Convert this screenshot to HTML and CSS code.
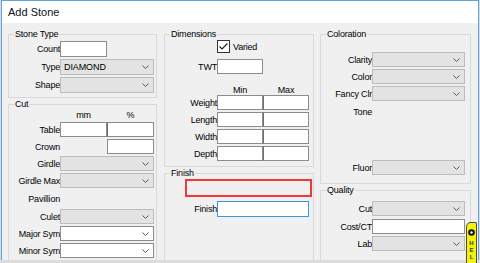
FILE: index.html
```html
<!DOCTYPE html>
<html>
<head>
<meta charset="utf-8">
<link rel="stylesheet" href="styles.css">
</head>
<body>
<div class="window">
  <div class="titlebar">Add Stone</div>
  <div class="client">
    <div class="col col1">
      <fieldset class="group g-stone">
        <legend>Stone Type</legend>
        <div class="rows">
          <div class="row r16"><span class="lbl">Count</span><span class="tb w47"></span></div>
          <div class="row r16"><span class="lbl">Type</span><span class="cb w94"><span class="cb-text">DIAMOND</span><svg class="chev" width="7" height="4" viewBox="0 0 7 4"><polyline points="0.5,0.5 3.5,3.5 6.5,0.5" fill="none" stroke="#5a5a5a" stroke-width="1"/></svg></span></div>
          <div class="row r16"><span class="lbl">Shape</span><span class="cb w94"><span class="cb-text"></span><svg class="chev" width="7" height="4" viewBox="0 0 7 4"><polyline points="0.5,0.5 3.5,3.5 6.5,0.5" fill="none" stroke="#5a5a5a" stroke-width="1"/></svg></span></div>
        </div>
      </fieldset>
      <fieldset class="group g-cut grow">
        <legend>Cut</legend>
        <div class="rows">
          <div class="row hdr"><span class="lbl"></span><span class="hcell w47">mm</span><span class="hcell w47">%</span></div>
          <div class="row r15 t2"><span class="lbl">Table</span><span class="tb w47"></span><span class="tb w47"></span></div>
          <div class="row r15"><span class="lbl">Crown</span><span class="tb w47 skip47"></span></div>
          <div class="row r15"><span class="lbl">Girdle</span><span class="cb w94"><span class="cb-text"></span><svg class="chev" width="7" height="4" viewBox="0 0 7 4"><polyline points="0.5,0.5 3.5,3.5 6.5,0.5" fill="none" stroke="#5a5a5a" stroke-width="1"/></svg></span></div>
          <div class="row r15"><span class="lbl">Girdle Max</span><span class="cb w94"><span class="cb-text"></span><svg class="chev" width="7" height="4" viewBox="0 0 7 4"><polyline points="0.5,0.5 3.5,3.5 6.5,0.5" fill="none" stroke="#5a5a5a" stroke-width="1"/></svg></span></div>
          <div class="row r17"><span class="lbl">Pavillion</span></div>
          <div class="row r15"><span class="lbl">Culet</span><span class="cb w94"><span class="cb-text"></span><svg class="chev" width="7" height="4" viewBox="0 0 7 4"><polyline points="0.5,0.5 3.5,3.5 6.5,0.5" fill="none" stroke="#5a5a5a" stroke-width="1"/></svg></span></div>
          <div class="row r15"><span class="lbl">Major Sym</span><span class="cb cb-edit w94"><span class="cb-text"></span><svg class="chev" width="7" height="4" viewBox="0 0 7 4"><polyline points="0.5,0.5 3.5,3.5 6.5,0.5" fill="none" stroke="#5a5a5a" stroke-width="1"/></svg></span></div>
          <div class="row r15"><span class="lbl">Minor Sym</span><span class="cb cb-edit w94"><span class="cb-text"></span><svg class="chev" width="7" height="4" viewBox="0 0 7 4"><polyline points="0.5,0.5 3.5,3.5 6.5,0.5" fill="none" stroke="#5a5a5a" stroke-width="1"/></svg></span></div>
        </div>
      </fieldset>
    </div>

    <div class="col col2">
      <fieldset class="group g-dim">
        <legend>Dimensions</legend>
        <div class="rows">
          <div class="row r13 chkrow"><span class="lbl"></span><span class="chk"><svg width="11" height="11" viewBox="0 0 11 11"><polyline points="1.5,5.5 4,8 9.5,2.5" fill="none" stroke="#222" stroke-width="1.2"/></svg></span><span class="chk-text">Varied</span></div>
          <div class="row r15 twt"><span class="lbl">TWT</span><span class="tb w46"></span></div>
          <div class="row hdr mmhdr"><span class="lbl"></span><span class="hcell w46">Min</span><span class="hcell w46">Max</span></div>
          <div class="row r15 t1"><span class="lbl">Weight</span><span class="tb w46"></span><span class="tb w46"></span></div>
          <div class="row r15"><span class="lbl">Length</span><span class="tb w46"></span><span class="tb w46"></span></div>
          <div class="row r15"><span class="lbl">Width</span><span class="tb w46"></span><span class="tb w46"></span></div>
          <div class="row r15"><span class="lbl">Depth</span><span class="tb w46"></span><span class="tb w46"></span></div>
        </div>
      </fieldset>
      <fieldset class="group g-finish grow">
        <legend>Finish</legend>
        <div class="rows">
          <div class="errbox"></div>
          <div class="row r16 finrow"><span class="lbl">Finish</span><span class="tb tb-focus w92"></span></div>
        </div>
      </fieldset>
    </div>

    <div class="col col3">
      <fieldset class="group g-color">
        <legend>Coloration</legend>
        <div class="rows">
          <div class="row r15 first"><span class="lbl">Clarity</span><span class="cb w93"><span class="cb-text"></span><svg class="chev" width="7" height="4" viewBox="0 0 7 4"><polyline points="0.5,0.5 3.5,3.5 6.5,0.5" fill="none" stroke="#5a5a5a" stroke-width="1"/></svg></span></div>
          <div class="row r15"><span class="lbl">Color</span><span class="cb w93"><span class="cb-text"></span><svg class="chev" width="7" height="4" viewBox="0 0 7 4"><polyline points="0.5,0.5 3.5,3.5 6.5,0.5" fill="none" stroke="#5a5a5a" stroke-width="1"/></svg></span></div>
          <div class="row r15"><span class="lbl">Fancy Clr</span><span class="cb w93"><span class="cb-text"></span><svg class="chev" width="7" height="4" viewBox="0 0 7 4"><polyline points="0.5,0.5 3.5,3.5 6.5,0.5" fill="none" stroke="#5a5a5a" stroke-width="1"/></svg></span></div>
          <div class="row r15 tone"><span class="lbl">Tone</span></div>
          <div class="row r15 fluor"><span class="lbl">Fluor</span><span class="cb w93"><span class="cb-text"></span><svg class="chev" width="7" height="4" viewBox="0 0 7 4"><polyline points="0.5,0.5 3.5,3.5 6.5,0.5" fill="none" stroke="#5a5a5a" stroke-width="1"/></svg></span></div>
        </div>
      </fieldset>
      <fieldset class="group g-quality grow">
        <legend>Quality</legend>
        <div class="rows">
          <div class="row r15 qfirst"><span class="lbl">Cut</span><span class="cb w93"><span class="cb-text"></span><svg class="chev" width="7" height="4" viewBox="0 0 7 4"><polyline points="0.5,0.5 3.5,3.5 6.5,0.5" fill="none" stroke="#5a5a5a" stroke-width="1"/></svg></span></div>
          <div class="row r15 t3"><span class="lbl">Cost/CT</span><span class="tb w93"></span></div>
          <div class="row r15"><span class="lbl">Lab</span><span class="cb w93"><span class="cb-text"></span><svg class="chev" width="7" height="4" viewBox="0 0 7 4"><polyline points="0.5,0.5 3.5,3.5 6.5,0.5" fill="none" stroke="#5a5a5a" stroke-width="1"/></svg></span></div>
        </div>
      </fieldset>
    </div>
  </div>
</div>
<div class="help-tab">
  <svg class="help-eye" width="7" height="7" viewBox="0 0 7 7"><circle cx="3.5" cy="3.5" r="3.3" fill="#111"/><circle cx="3.5" cy="3.5" r="1.2" fill="#fff"/></svg>
  <span class="help-letter">H</span>
  <span class="help-letter">E</span>
  <span class="help-letter">L</span>
</div>
</body>
</html>
```

FILE: styles.css
```css
* { box-sizing: border-box; }
html, body { margin: 0; padding: 0; }
body {
  width: 480px;
  height: 263px;
  overflow: hidden;
  background: #dcdcdc;
  font-family: "Liberation Sans", Arial, sans-serif;
  font-size: 9px;
  letter-spacing: -0.2px;
  color: #000;
  position: relative;
}
.window {
  margin-left: 1px;
  width: 478px;
  height: 260px;
  border: 1px solid #62a3dc;
  border-bottom: none;
  background: #f0f0f0;
  overflow: hidden;
  display: flex;
  flex-direction: column;
}
.titlebar {
  flex: none;
  height: 22px;
  background: #fff;
  padding-left: 6px;
  font-size: 11px;
  line-height: 22px;
  letter-spacing: 0;
  color: #111;
}
.client {
  flex: none;
  height: 300px;
  display: flex;
  padding: 5px 0 0 6px;
}
.col { display: flex; flex-direction: column; }
.col1 { width: 149px; margin-right: 7px; }
.col2 { width: 150px; margin-right: 6px; }
.col3 { width: 151px; }
.grow { flex: 1 1 auto; }

fieldset.group {
  margin: 0;
  padding: 0;
  border: 1px solid #d9d9d9;
  min-width: 0;
}
legend {
  margin-left: 5px;
  padding: 0 1px;
  height: 12px;
  line-height: 12px;
  font-size: 9px;
}
.rows { display: flex; flex-direction: column; }
.row { display: flex; align-items: center; flex: none; }
.row + .row { margin-top: 2px; }
.r13 { height: 13px; }
.r15 { height: 15px; }
.r16 { height: 16px; }
.r17 { height: 17px; }
.lbl {
  flex: none;
  text-align: right;
  white-space: nowrap;
}
.col1 .lbl { width: 51px; }
.col2 .lbl { width: 52px; }
.col3 .lbl { width: 51px; }

.tb {
  flex: none;
  height: 100%;
  background: #fff;
  border: 1px solid #8c8c8c;
}
.tb + .tb { border-left-color: #6e6e6e; }
.tb-focus { border-color: #3f95df; }
.w46 { width: 46px; }
.w47 { width: 47px; }
.w92 { width: 92px; }
.w93 { width: 93px; }
.w94 { width: 94px; }
.skip47 { margin-left: 47px; }

.cb {
  flex: none;
  height: 100%;
  background: #e3e3e3;
  border: 1px solid #bcbcbc;
  display: flex;
  align-items: center;
  padding: 0 4px 0 3px;
}
.cb-edit { background: #fff; border-color: #8c8c8c; }
.cb-text { flex: 1; letter-spacing: -0.1px; }
.chev { flex: none; display: block; }

.hdr { height: 10px; }
.hcell { flex: none; text-align: center; line-height: 10px; }
.t1 { margin-top: 0 !important; }
.t2 { margin-top: 2px; }
.t3 { margin-top: 3px !important; }

/* Stone Type */
.g-stone .rows { padding: 1px 2px 4px 0; }
/* Cut */
.g-cut { margin-top: 6px; }

/* Dimensions */
.g-dim .rows { padding: 0 4px 5px 0; }
.chk {
  flex: none;
  width: 13px;
  height: 13px;
  border: 1px solid #333;
  background: #fff;
  display: flex;
  align-items: center;
  justify-content: center;
}
.chk svg { display: block; }
.chk-text { margin-left: 3px; }
.twt { margin-top: 6px !important; }
.mmhdr { margin-top: 11px !important; }
.mmhdr + .row { margin-top: 0; }

/* Finish */
.g-finish { margin-top: 9px; }
.errbox {
  flex: none;
  margin-left: 20px;
  width: 127px;
  height: 18px;
  border: 2px solid #f03a3a;
}
.finrow { margin-top: 4px; }

/* Coloration */
.g-color .rows { padding: 0 0 8px 0; }
.first { margin-top: 12px; }
.tone { margin-top: 3px !important; }
.fluor { margin-top: 41px !important; }

/* Quality */
.g-quality { margin-top: 7px; }
.qfirst { margin-top: 5px; }

/* Help tab */
.help-tab {
  position: absolute;
  left: 466px;
  top: 222px;
  width: 11px;
  height: 41px;
  background: #f2f20a;
  border: 1px solid #4c4c4c;
  border-bottom: none;
  border-radius: 5px 2px 0 0;
  display: flex;
  flex-direction: column;
  align-items: center;
  padding-top: 6px;
}
.help-eye { display: block; flex: none; margin-bottom: 4px; }
.help-letter {
  display: block;
  font-size: 6px;
  font-weight: bold;
  line-height: 7px;
  letter-spacing: 0;
  color: #333;
}
```
